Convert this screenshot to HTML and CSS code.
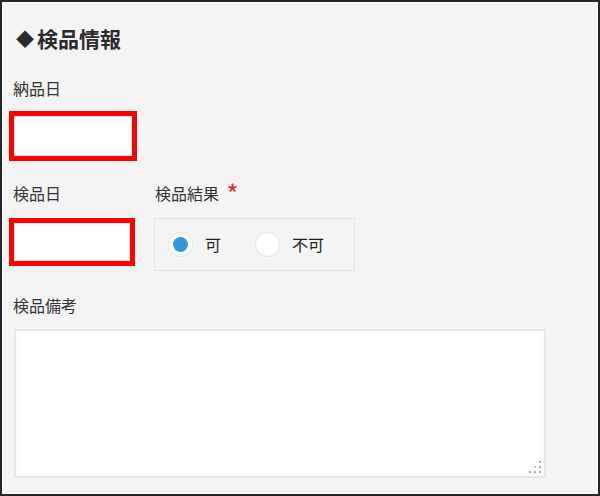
FILE: index.html
```html
<!DOCTYPE html>
<html lang="ja">
<head>
<meta charset="utf-8">
<link rel="stylesheet" href="styles.css">
</head>
<body>
<div class="frame">
  <h2 class="heading"><span class="diamond">◆</span>検品情報</h2>
  <div class="field field-first">
    <div class="label">納品日</div>
    <div class="input input-a"></div>
  </div>
  <div class="row">
    <div class="field col1">
      <div class="label">検品日</div>
      <div class="input input-b"></div>
    </div>
    <div class="field col2">
      <div class="label">検品結果 <span class="req">*</span></div>
      <div class="radio-group">
        <label class="radio-item"><span class="radio checked"><span class="dot"></span></span><span class="radio-text">可</span></label>
        <label class="radio-item"><span class="radio"></span><span class="radio-text">不可</span></label>
      </div>
    </div>
  </div>
  <div class="field field-notes">
    <div class="label">検品備考</div>
    <div class="textarea">
      <svg class="grip" width="14" height="14" viewBox="0 0 14 14">
        <rect x="10" y="0" width="2" height="2" fill="#a8a8a8"/>
        <rect x="5" y="5" width="2" height="2" fill="#c4c4c4"/>
        <rect x="10" y="5" width="2" height="2" fill="#a8a8a8"/>
        <rect x="0" y="10" width="2" height="2" fill="#a8a8a8"/>
        <rect x="5" y="10" width="2" height="2" fill="#a8a8a8"/>
        <rect x="10" y="10" width="2" height="2" fill="#a8a8a8"/>
      </svg>
    </div>
  </div>
</div>
</body>
</html>
```
FILE: styles.css
```css
* { box-sizing: border-box; }
html, body { margin: 0; padding: 0; }
body {
  font-family: "Noto Sans CJK JP", "Noto Sans", sans-serif;
  color: #333;
  background: #fff;
}
.frame {
  width: 600px;
  height: 496px;
  border: 2px solid #262626;
  box-shadow: inset 0 0 0 1px #fff;
  background: #f4f4f4;
  padding: 22px 0 0 11px;
  overflow: hidden;
}
.heading {
  margin: 0;
  padding-left: 3px;
  font-size: 21px;
  line-height: 28px;
  font-weight: bold;
  color: #2b2b2b;
}
.diamond {
  font-size: 18px;
  display: inline-block;
  width: 21px;
  vertical-align: 1px;
}
.label {
  font-size: 16px;
  line-height: 24px;
  height: 24px;
  color: #333;
}
.req {
  color: #e8242e;
  font-size: 26px;
  line-height: 10px;
  vertical-align: -4px;
  margin-left: 4px;
}
.field-first { margin-top: 24px; }
.field-first .input { margin-top: 11px; }
.input {
  background: #fff;
  border: 5px solid #ff0000;
  box-shadow: inset 0 0 0 1px #e4e4e4;
  margin-left: -4px;
}
.input-a { width: 128px; height: 50px; }
.input-b { width: 126px; height: 48px; margin-top: 13px; }
.row {
  display: flex;
  gap: 17px;
  margin-top: 20px;
}
.col1 { width: 124px; }
.col2 .label { padding-left: 1px; }
.radio-group {
  margin-top: 13px;
  width: 201px;
  height: 53px;
  border: 1px solid #e0e3e3;
  display: flex;
  align-items: center;
  padding-left: 13px;
  gap: 34px;
}
.radio-item {
  display: flex;
  align-items: center;
  gap: 12px;
}
.radio {
  width: 25px;
  height: 25px;
  border-radius: 50%;
  background: #fff;
  border: 1px solid #e3e6e6;
  box-shadow: 0 0 1px rgba(0,0,0,0.06);
  display: flex;
  align-items: center;
  justify-content: center;
}
.dot {
  width: 15px;
  height: 15px;
  border-radius: 50%;
  background: #3497dc;
}
.radio-text {
  font-size: 16px;
  line-height: 22px;
  color: #222;
  margin-top: -2px;
}
.field-notes { margin-top: 22px; }
.textarea {
  position: relative;
  margin-top: 12px;
  margin-left: 1px;
  width: 532px;
  height: 149px;
  background: #fff;
  border: 2px solid #e3e7e7;
  box-shadow: inset 0 0 6px rgba(0,0,0,0.04);
}
.grip {
  position: absolute;
  right: 1px;
  bottom: 1px;
}
```
